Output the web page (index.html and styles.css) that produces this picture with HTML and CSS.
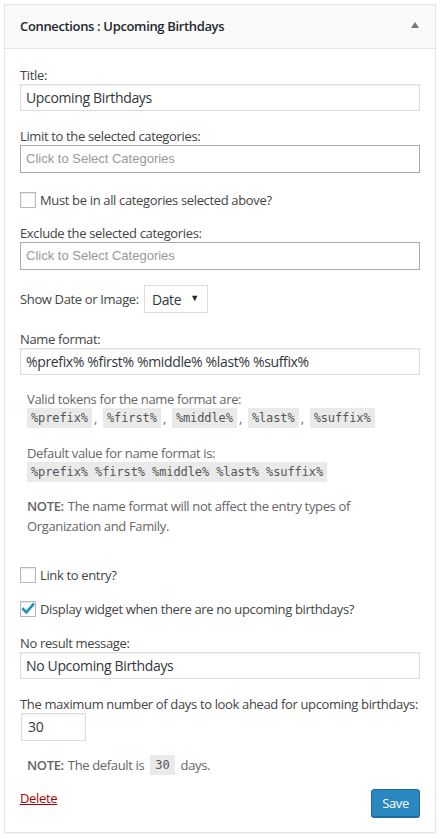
FILE: index.html
```html
<!DOCTYPE html>
<html>
<head>
<meta charset="utf-8">
<title>Connections : Upcoming Birthdays</title>
<link rel="stylesheet" href="styles.css">
</head>
<body>
<div class="widget">
  <div class="widget-top">
    <h3 class="widget-title">Connections : Upcoming Birthdays</h3>
    <span class="toggle"></span>
  </div>
  <div class="widget-inside">
    <div class="label f-title">Title:</div>
    <div class="input">Upcoming Birthdays</div>

    <div class="label f-gap16">Limit to the selected categories:</div>
    <div class="chosen">Click to Select Categories</div>

    <div class="check-row f-check1"><span class="checkbox"></span><span>Must be in all categories selected above?</span></div>

    <div class="label f-gap15">Exclude the selected categories:</div>
    <div class="chosen">Click to Select Categories</div>

    <div class="select-row">
      <span class="select-label">Show Date or Image:</span>
      <span class="select"><span>Date</span><span class="caret">&#9660;</span></span>
    </div>

    <div class="label f-gap17">Name format:</div>
    <div class="input">%prefix% %first% %middle% %last% %suffix%</div>

    <div class="desc f-desc1">
      <div class="desc-line">Valid tokens for the name format are:</div>
      <div class="code-row"><code>%prefix%</code><span class="sep">,</span><code>%first%</code><span class="sep">,</span><code>%middle%</code><span class="sep">,</span><code>%last%</code><span class="sep">,</span><code>%suffix%</code></div>
    </div>

    <div class="desc f-desc2">
      <div class="desc-line">Default value for name format is:</div>
      <div class="code-row"><code>%prefix% %first% %middle% %last% %suffix%</code></div>
    </div>

    <div class="desc note f-note">
      <div class="note-line"><strong>NOTE:</strong><span>The name format will not affect the entry types of</span></div>
      <div class="note-line">Organization and Family.</div>
    </div>

    <div class="check-row f-check2"><span class="checkbox"></span><span>Link to entry?</span></div>
    <div class="check-row f-check3"><span class="checkbox checked"><svg viewBox="0 0 16 16" width="16" height="16"><path d="M3.2 8.2 L6.4 11.4 L13 3.6" fill="none" stroke="#1e8cbe" stroke-width="2.6" stroke-linecap="square"/></svg></span><span>Display widget when there are no upcoming birthdays?</span></div>

    <div class="label f-gap16">No result message:</div>
    <div class="input">No Upcoming Birthdays</div>

    <div class="label f-gap16">The maximum number of days to look ahead for upcoming birthdays:</div>
    <div class="input small">30</div>

    <div class="desc default-row"><strong>NOTE:</strong><span>The default is</span><code>30</code><span>days.</span></div>

    <div class="actions">
      <a class="delete" href="#">Delete</a>
      <span class="button-primary">Save</span>
    </div>
  </div>
</div>
</body>
</html>
```
FILE: styles.css
```css
* { box-sizing: border-box; }
html, body { margin: 0; padding: 0; background: #fff; }
body {
  font-family: "Open Sans", "Noto Sans", sans-serif;
  font-size: 13px;
  color: #444;
  letter-spacing: -0.35px;
}
.widget {
  margin: 4px;
  width: 432px;
  border: 1px solid #e5e5e5;
  box-shadow: 0 1px 1px rgba(0,0,0,0.04);
  background: #fff;
}
.widget-top {
  height: 44px;
  background: #fafafa;
  border-bottom: 1px solid #e5e5e5;
  display: flex;
  align-items: center;
  justify-content: space-between;
  padding: 0 16px 1px 15px;
}
.widget-title {
  margin: 0;
  font-size: 13px;
  font-weight: 600;
  color: #23282d;
  line-height: 18px;
}
.toggle {
  width: 0; height: 0;
  border-left: 4px solid transparent;
  border-right: 4px solid transparent;
  border-bottom: 6px solid #72777c;
  margin-top: -2px;
}
.widget-inside {
  padding: 0 15px 15px;
  display: flex;
  flex-direction: column;
}
.label { line-height: 18px; height: 18px; white-space: nowrap; }
.f-title { margin-top: 17px; }
.f-gap15 { margin-top: 15px; }
.f-gap16 { margin-top: 16px; }
.f-gap17 { margin-top: 17px; }
.input {
  height: 27px;
  border: 1px solid #ddd;
  box-shadow: inset 0 1px 2px rgba(0,0,0,0.07);
  padding: 0 5px;
  font-size: 14px;
  line-height: 25px;
  color: #32373c;
  background: #fff;
}
.input.small { width: 65px; height: 28px; line-height: 26px; margin-left: 1px; padding-left: 6px; }
.chosen {
  height: 28px;
  border: 1px solid #aaa;
  padding: 0 5px;
  font-family: "Liberation Sans", Arial, sans-serif;
  font-size: 13px;
  letter-spacing: 0;
  line-height: 26px;
  color: #999;
  background: #fff;
}
.check-row {
  display: flex;
  align-items: center;
  gap: 4px;
  height: 18px;
  line-height: 18px;
  white-space: nowrap;
}
.f-check1 { margin-top: 18px; }
.f-check2 { margin-top: 30px; }
.f-check3 { margin-top: 16px; }
.checkbox {
  width: 16px; height: 16px;
  border: 1px solid #b4b9be;
  background: #fff;
  box-shadow: inset 0 1px 2px rgba(0,0,0,0.1);
  display: flex;
  align-items: center;
  justify-content: center;
  flex: none;
}
.checkbox svg { display: block; margin: -1px; }
.select-row {
  margin-top: 15px;
  display: flex;
  align-items: center;
  gap: 5px;
  height: 28px;
}
.select {
  width: 64px; height: 28px;
  border: 1px solid #ddd;
  display: flex;
  align-items: center;
  justify-content: space-between;
  padding: 0 8px 0 7px;
  font-size: 14px;
  color: #32373c;
}
.caret { font-size: 9px; color: #222; margin-top: -3px; }
.desc { color: #666; padding-left: 7px; }
.desc-line { line-height: 18px; height: 18px; }
.f-desc1 { margin-top: 15px; }
.f-desc2 { margin-top: 16px; }
.code-row { display: flex; align-items: center; height: 20px; }
code {
  font-family: "DejaVu Sans Mono", "Liberation Mono", monospace;
  font-size: 12px;
  letter-spacing: -0.1px;
  background: #eaeaea;
  color: #555;
  padding: 0 4px;
  height: 20px;
  line-height: 20px;
  display: inline-block;
}
.sep { width: 11px; padding-left: 2px; }
.note { margin-top: 14px; }
.note-line { line-height: 20px; height: 20px; display: flex; gap: 4px; white-space: nowrap; }
.note strong, .default-row strong { font-weight: 600; }
.default-row {
  margin-top: 14px;
  height: 20px;
  line-height: 20px;
  display: flex;
  align-items: center;
  gap: 4px;
  white-space: nowrap;
}
.default-row code { margin: 0 2px; padding: 0 5px; }
.actions {
  margin-top: 14px;
  display: flex;
  justify-content: space-between;
  align-items: flex-start;
}
.delete {
  color: #a00;
  text-decoration: underline;
  line-height: 18px;
}
.button-primary {
  width: 49px; height: 28px;
  background: #2b87bf;
  border: 1px solid #1f6d9e;
  border-radius: 3px;
  box-shadow: 0 1px 0 #1f6d9e;
  color: #fff;
  font-size: 13px;
  display: flex;
  align-items: center;
  justify-content: center;
  padding-bottom: 1px;
}
```
